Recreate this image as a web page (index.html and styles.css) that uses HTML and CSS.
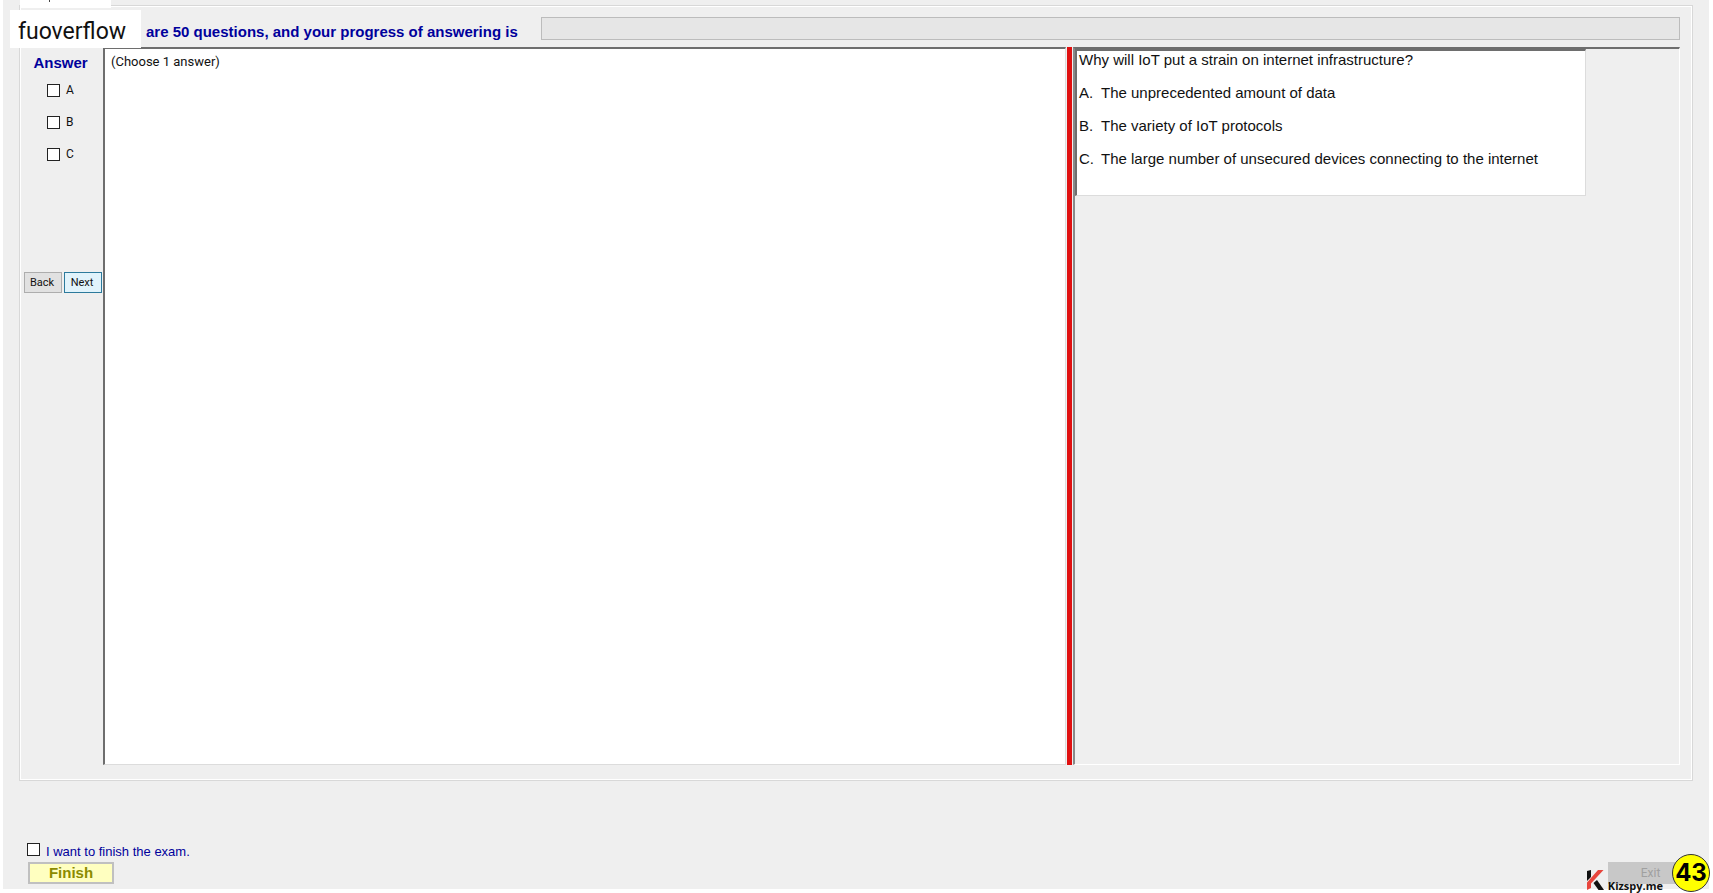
FILE: index.html
```
<!DOCTYPE html>
<html lang="en">
<head>
  <meta charset="UTF-8" />
  <title>Exam</title>
  <meta name="viewport" content="width=device-width, initial-scale=1.0" />
  <link rel="stylesheet" href="styles.css">
</head>
<body>
<div class="app">
  <div class="watermark">fuoverflow</div>

  <div class="tabs">
    <div class="tab"></div>
  </div>

  <main class="page">
    <div class="status">
      <label for="progress">are 50 questions, and your progress of answering is</label>
      <progress id="progress" value="0" max="50"></progress>
    </div>

    <div class="exam">
      <aside class="side">
        <h2>Answer</h2>
        <div class="answers">
          <label><input type="checkbox" name="answer" value="A"> A</label>
          <label><input type="checkbox" name="answer" value="B"> B</label>
          <label><input type="checkbox" name="answer" value="C"> C</label>
        </div>
        <div class="nav">
          <button type="button">Back</button>
          <button type="button" class="active">Next</button>
        </div>
      </aside>

      <section class="note">(Choose 1 answer)</section>
      <div class="splitter"></div>
      <section class="viewer">
        <div class="question">
          <p>Why will IoT put a strain on internet infrastructure?</p>
          <p><span class="letter">A.</span>The unprecedented amount of data</p>
          <p><span class="letter">B.</span>The variety of IoT protocols</p>
          <p><span class="letter">C.</span>The large number of unsecured devices connecting to the internet</p>
        </div>
      </section>
    </div>
  </main>

  <footer class="footer">
    <div class="finish">
      <label><input type="checkbox" name="finish"> I want to finish the exam.</label>
      <button type="button" class="finish-btn">Finish</button>
    </div>
    <button type="button" class="exit-btn" disabled>Exit</button>
  </footer>

  <div class="brand">
    <svg width="18" height="21" viewBox="0 0 18 21">
      <path d="M1 1 L5 0 V7 L1 11 Z" fill="#111" />
      <path d="M12 0 H17.500 L5 13.500 V18 L1 20 V12.500 Z" fill="#e8453c" />
      <path d="M7.500 13 L11 10 L18 20 H12.500 Z" fill="#111" />
    </svg>
    <span>Kizspy.me</span>
  </div>
  <div class="badge">43</div>
</div>
</body>
</html>
```

FILE: styles.css
```
* {
  box-sizing: border-box;
}

body {
  margin: 0;
  background: #fff;
  color: #111;
  font-family: "Liberation Sans", Arial, sans-serif;
  font-size: 13px;
}

.app {
  position: relative;
  display: flex;
  flex-direction: column;
  min-height: calc(100vh - 4px);
  margin: 0 4px 4px 3px;
  background: #efefef;
}

/* tab strip, scrolled almost out of view */
.tabs {
  height: 5px;
  padding-left: 17px;
}
.tab {
  position: relative;
  z-index: 1;
  width: 91px;
  height: 8px;
  background: #fff;
}
.tab::before {
  content: "";
  position: absolute;
  left: 29px;
  top: 0;
  width: 1px;
  height: 2px;
  background: #444;
}

.page {
  flex: 1;
  display: flex;
  flex-direction: column;
  margin: 0 16px;
  padding: 0 12px 15px 1px;
  border: 1px solid #d8d8d8;
  box-shadow: inset 1px 1px #fff, inset -1px -1px #fff;
}

.status {
  display: flex;
  align-items: flex-start;
  gap: 23px;
  height: 41px;
  padding: 11px 0 0 125px;
}
.status label {
  padding-top: 6px;
  color: #00009c;
  font-size: 15px;
  font-weight: bold;
  line-height: 18px;
}
progress {
  flex: 1;
  height: 23px;
  appearance: none;
  background: #e6e6e6;
  border: 1px solid #bcbcbc;
}
progress::-webkit-progress-bar {
  background: #e6e6e6;
}

.exam {
  flex: 1;
  display: flex;
}

/* answers column */
.side {
  width: 82px;
  padding: 7px 0 0 3px;
}
.side h2 {
  margin: 0;
  padding-right: 6px;
  color: #00009c;
  font-size: 15px;
  line-height: 18px;
  text-align: center;
}
.answers {
  height: 200px;
  padding: 2px 0 0 23px;
}
.answers label {
  display: flex;
  align-items: center;
  gap: 6px;
  height: 32px;
  font-family: Roboto, sans-serif;
  font-size: 12px;
}
input[type="checkbox"] {
  flex: none;
  width: 13px;
  height: 13px;
  margin: 0;
  appearance: none;
  background: #fff;
  border: 1px solid #222;
}
input[type="checkbox"]:checked {
  background: #222;
  box-shadow: inset 0 0 0 2px #fff;
}
.nav {
  display: flex;
  gap: 2px;
}
.nav button {
  width: 38px;
  height: 21px;
  padding: 0 2px 0 0;
  background: #e1e1e1;
  border: 1px solid #adadad;
  color: #111;
  font-family: Roboto, sans-serif;
  font-size: 11px;
}
.nav .active {
  background: #e1f3fb;
  border-color: #2c7a9c;
}

/* panes */
.note {
  flex: 959;
  padding: 5px 6px;
  background: #fff;
  border: 1px solid #dcdcdc;
  border-top: 2px solid #6e6e6e;
  border-left: 2px solid #6e6e6e;
  font-family: Roboto, sans-serif;
  line-height: 16px;
}
.splitter {
  width: 5px;
  margin: 0 1px;
  background: #e01010;
  cursor: col-resize;
}
.viewer {
  flex: 611;
  border: 1px solid #fff;
  border-top: 2px solid #6e6e6e;
  border-left: 2px solid #8a8a8a;
}
.question {
  max-width: 511px;
  min-height: 147px;
  padding: 0 2px;
  background: #fff;
  border: 1px solid #dcdcdc;
  border-top: 2px solid #6e6e6e;
  border-left: 2px solid #6e6e6e;
  font-size: 15px;
}
.question p {
  margin: 0 0 15px;
  line-height: 18px;
}
.letter {
  display: inline-block;
  width: 22px;
}

.footer {
  display: flex;
  justify-content: space-between;
  align-items: flex-end;
  height: 108px;
  padding: 0 8px 5px 24px;
}
.finish label {
  display: flex;
  gap: 6px;
  height: 19px;
  color: #00009c;
  line-height: 17px;
}
.finish-btn {
  display: block;
  width: 86px;
  height: 22px;
  margin-left: 1px;
  padding: 0;
  background: #ffffc0;
  border: 2px solid #c0c0c0;
  color: #8b8b00;
  font-family: inherit;
  font-size: 15px;
  font-weight: bold;
  line-height: 18px;
}
.exit-btn {
  width: 93px;
  height: 22px;
  padding: 0 8px 0 0;
  background: #c8c8c8;
  border: 0;
  color: #a0a0a0;
  font-family: Roboto, sans-serif;
  font-size: 12px;
}

/* overlays */
.watermark {
  position: absolute;
  z-index: 2;
  left: 7px;
  top: 10px;
  width: 131px;
  height: 38px;
  padding-left: 8px;
  background: #fff;
  font-family: Roboto, sans-serif;
  font-size: 23px;
  line-height: 44px;
}
.brand {
  position: absolute;
  right: 46px;
  bottom: -4px;
  display: flex;
  align-items: flex-start;
  gap: 4px;
  height: 23px;
  font-family: "Open Sans", sans-serif;
  font-size: 11px;
  font-weight: bold;
}
.brand span {
  padding-top: 9px;
  line-height: 14px;
}
.badge {
  position: absolute;
  right: -1px;
  bottom: -3px;
  width: 38px;
  height: 38px;
  background: #ff0;
  border: 1px solid #333;
  border-radius: 50%;
  color: #000;
  font-family: Inter, sans-serif;
  font-size: 24px;
  font-weight: bold;
  line-height: 36px;
  text-align: center;
}
```
